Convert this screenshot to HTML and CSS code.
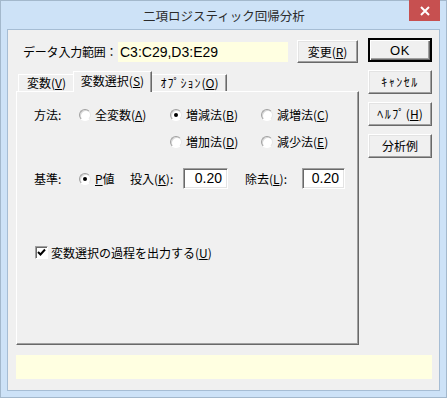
FILE: index.html
```html
<!DOCTYPE html>
<html lang="ja">
<head>
    <meta charset="UTF-8">
    <meta name="viewport" content="width=device-width, initial-scale=1.0">
    <title>二項ロジスティック回帰分析</title>
    <link rel="stylesheet" href="styles.css">
</head>
<body>
    <div class="window">
        <div class="titlebar">
            <span class="title">二項ロジスティック回帰分析</span>
            <div class="close-btn">
                <svg width="10" height="10" viewBox="0 0 10 10">
                    <path d="M1 1 L9 9 M9 1 L1 9" stroke="#fff" stroke-width="2" fill="none"/>
                </svg>
            </div>
        </div>

        <div class="client">
            <div class="main">
                <div class="left">
                    <div class="range-row">
                        <span class="range-label">データ入力範囲：</span>
                        <div class="range-field">C3:C29,D3:E29</div>
                        <button class="btn change-btn">変更(<u>R</u>)</button>
                    </div>

                    <div class="tabs">
                        <div class="tab tab-first">変数(<u>V</u>)</div>
                        <div class="tab active">変数選択(<u>S</u>)</div>
                        <div class="tab tab-last"><span class="hw">ｵﾌﾟｼｮﾝ</span>(<u>O</u>)</div>
                    </div>

                    <div class="panel">
                        <div class="method-grid">
                            <span class="field-label">方法:</span>
                            <span class="option"><span class="radio"></span><span>全変数(<u>A</u>)</span></span>
                            <span class="option"><span class="radio checked"></span><span>増減法(<u>B</u>)</span></span>
                            <span class="option"><span class="radio"></span><span>減増法(<u>C</u>)</span></span>
                            <span></span>
                            <span></span>
                            <span class="option"><span class="radio"></span><span>増加法(<u>D</u>)</span></span>
                            <span class="option"><span class="radio"></span><span>減少法(<u>E</u>)</span></span>
                        </div>

                        <div class="criteria-row">
                            <span class="field-label">基準:</span>
                            <span class="option p-option"><span class="radio checked"></span><span><u>P</u>値</span></span>
                            <span class="in-label in-label-k">投入(<u>K</u>):</span>
                            <div class="num-box num-k">0.20</div>
                            <span class="in-label in-label-l">除去(<u>L</u>):</span>
                            <div class="num-box num-l">0.20</div>
                        </div>

                        <div class="check-row">
                            <span class="checkbox">
                                <svg width="9" height="9" viewBox="0 0 9 9">
                                    <path d="M1 4 L3.5 6.5 L8 1.5" stroke="#000" stroke-width="2" fill="none"/>
                                </svg>
                            </span>
                            <span>変数選択の過程を出力する(<u>U</u>)</span>
                        </div>
                    </div>
                </div>

                <div class="side">
                    <button class="btn side-btn default-btn"><span class="ok-text">OK</span></button>
                    <button class="btn side-btn"><span class="hw">ｷｬﾝｾﾙ</span></button>
                    <button class="btn side-btn"><span class="hw">ﾍﾙﾌﾟ</span>(<u>H</u>)</button>
                    <button class="btn side-btn">分析例</button>
                </div>
            </div>

            <div class="status-bar"></div>
        </div>
    </div>
</body>
</html>
```

FILE: styles.css
```css
body {
    margin: 0;
    font-family: "Noto Sans CJK JP", "Noto Sans", sans-serif;
    font-size: 12px;
    color: #000;
    background-color: #cde2f7;
}
.window {
    position: relative;
    width: 447px;
    height: 398px;
    box-sizing: border-box;
    border: 1px solid #a3b8cc;
    background-color: #cde2f7;
    padding: 0 6px;
}
.titlebar {
    height: 28px;
    display: flex;
    justify-content: center;
    align-items: center;
}
.title {
    font-size: 12.5px;
    color: #2b2b2b;
    margin-left: 1px;
}
.close-btn {
    position: absolute;
    top: -1px;
    right: 6px;
    width: 31px;
    height: 21px;
    background-color: #c75050;
    display: flex;
    justify-content: center;
    align-items: center;
}
.client {
    height: 362px;
    box-sizing: border-box;
    border: 1px solid #a6bdd4;
    background-color: #f0f0f0;
    padding: 8px 0 0 8px;
}
.main {
    display: flex;
    gap: 9px;
}
.left {
    width: 343px;
}
.range-row {
    margin-top: 2px;
    height: 23px;
    display: flex;
    align-items: center;
    padding-left: 7px;
}
.range-label {
    width: 95px;
    white-space: nowrap;
    letter-spacing: -0.2px;
}
.range-field {
    width: 170px;
    height: 20px;
    background-color: #ffffe1;
    font-family: "Liberation Sans", Arial, sans-serif;
    font-size: 14px;
    line-height: 21px;
    padding-left: 2px;
    box-sizing: border-box;
}
.hw {
    letter-spacing: 1.5px;
}
.btn {
    font-family: "Noto Sans CJK JP", "Noto Sans", sans-serif;
    font-size: 12px;
    color: #000;
    background-color: #f0f0f0;
    border: 1px solid;
    border-color: #fff #696969 #696969 #fff;
    box-shadow: inset -1px -1px 0 #a0a0a0, inset 1px 1px 0 #e3e3e3;
    padding: 0;
    line-height: 18px;
}
.change-btn {
    width: 61px;
    height: 23px;
    margin-left: 9px;
}
.tabs {
    margin-top: 8px;
    height: 20px;
    display: flex;
    align-items: flex-end;
    padding-left: 2px;
    position: relative;
    z-index: 1;
}
.tab {
    height: 17px;
    box-sizing: border-box;
    border-top: 1px solid #fff;
    border-left: 1px solid #fff;
    border-right: 1px solid #696969;
    box-shadow: inset -1px 0 0 #a0a0a0;
    line-height: 16px;
    text-align: center;
    background-color: #f0f0f0;
    white-space: nowrap;
}
.tab-first {
    width: 57px;
}
.tab.active {
    width: 79px;
    height: 21px;
    margin: 0 -2px -1px;
    line-height: 18px;
    position: relative;
    z-index: 2;
}
.tab-last {
    width: 77px;
    padding-left: 2px;
}
.tab-last .hw {
    letter-spacing: 1px;
}
.panel {
    height: 254px;
    box-sizing: border-box;
    border-top: 1px solid #fff;
    border-left: 1px solid #fff;
    border-right: 1px solid #696969;
    border-bottom: 1px solid #696969;
    box-shadow: inset -1px -1px 0 #a0a0a0;
    padding: 14px 0 0 17px;
}
.method-grid {
    display: grid;
    grid-template-columns: 45px 91px 91px auto;
    grid-auto-rows: 18px;
    row-gap: 9px;
    align-items: center;
}
.field-label {
    line-height: 18px;
}
.option {
    display: flex;
    align-items: center;
    gap: 4px;
    line-height: 18px;
    white-space: nowrap;
}
.radio {
    width: 12px;
    height: 12px;
    box-sizing: border-box;
    border-radius: 50%;
    background-color: #fff;
    border: 1px solid;
    border-color: #a0a0a0 #e6e6e6 #fff #a0a0a0;
    box-shadow: inset 1px 1px 0 #d8d8d8;
    display: flex;
    justify-content: center;
    align-items: center;
    flex-shrink: 0;
}
.radio.checked::after {
    content: "";
    width: 4px;
    height: 4px;
    border-radius: 50%;
    background-color: #000;
}
.criteria-row {
    margin-top: 17px;
    height: 21px;
    display: flex;
    align-items: center;
}
.criteria-row .field-label {
    width: 45px;
}
.p-option {
    width: 51px;
}
.in-label-k {
    width: 53px;
}
.in-label-l {
    width: 57px;
    margin-left: 17px;
}
.num-box {
    height: 21px;
    box-sizing: border-box;
    background-color: #fff;
    border: 1px solid;
    border-color: #a0a0a0 #fff #fff #a0a0a0;
    box-shadow: inset 1px 1px 0 #696969, inset -1px -1px 0 #e3e3e3;
    font-family: "Liberation Sans", Arial, sans-serif;
    font-size: 14px;
    line-height: 19px;
    text-align: right;
    padding-right: 5px;
}
.num-k {
    width: 45px;
}
.num-l {
    width: 43px;
}
.check-row {
    margin-top: 54px;
    height: 18px;
    display: flex;
    align-items: center;
    gap: 3px;
    padding-left: 1px;
}
.checkbox {
    width: 13px;
    height: 13px;
    box-sizing: border-box;
    background-color: #fff;
    border: 1px solid;
    border-color: #a0a0a0 #fff #fff #a0a0a0;
    box-shadow: inset 1px 1px 0 #696969;
    display: flex;
    justify-content: center;
    align-items: center;
}
.side {
    width: 64px;
    display: flex;
    flex-direction: column;
    gap: 8px;
}
.side-btn {
    width: 64px;
    height: 24px;
}
.ok-text {
    font-family: "Liberation Sans", Arial, sans-serif;
    font-size: 13px;
    font-weight: normal;
    letter-spacing: 0.5px;
}
.default-btn {
    border-width: 2px;
    border-color: #000;
    box-shadow: inset 1px 1px 0 #fff, inset -1px -1px 0 #696969, inset -2px -2px 0 #a0a0a0;
}
.status-bar {
    margin-top: 10px;
    width: 416px;
    height: 24px;
    background-color: #ffffe1;
}
```
